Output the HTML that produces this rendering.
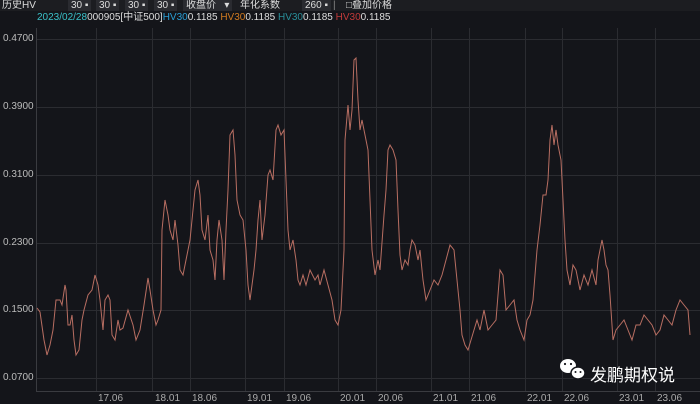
<!DOCTYPE html><html><head><meta charset="utf-8"><style>
body{margin:0;width:700px;height:404px;background:#14151a;overflow:hidden;font-family:"Liberation Sans","Noto Sans CJK SC",sans-serif;position:relative}
.hd{position:absolute;left:0;top:0;width:700px;height:11px;background:#1c1d21;font-size:10px;color:#ddd;line-height:11px}
.hd span{position:absolute;top:0}
.in{background:#2a2b30;color:#ddd;padding:0 3px}
.l2{position:absolute;left:37px;top:12px;font-size:10px;line-height:12px;color:#ddd;white-space:nowrap}
.yl{position:absolute;left:3px;font-size:10px;color:#bbb}
.xl{position:absolute;top:393px;font-size:10px;color:#aaa}
.wm{position:absolute;left:590px;top:361px;color:#fff;font-size:17px}
</style></head><body>
<div class="hd"><span style="left:2px">历史HV</span>
<span style="left:68px" class="in">30 ▪</span><span style="left:96px" class="in">30 ▪</span><span style="left:125px" class="in">30 ▪</span><span style="left:154px" class="in">30 ▪</span>
<span style="left:183px" class="in">收盘价 &nbsp;&nbsp;▾</span><span style="left:240px">年化系数</span><span style="left:302px" class="in">260 ▪</span><span style="left:333px;color:#888">|</span>
<span style="left:346px">□叠加价格</span></div>
<div class="l2"><span style="color:#3ac0c8">2023/02/28</span>000905[中证500]<span style="color:#2a9fd6">HV30</span>0.1185 <span style="color:#d07a20">HV30</span>0.1185 <span style="color:#2a8f9a">HV30</span>0.1185 <span style="color:#c23a3a">HV30</span>0.1185</div>
<svg width="700" height="404" style="position:absolute;left:0;top:0">
<g stroke="#2b2c31" stroke-width="1">
<line x1="36" y1="39.5" x2="700" y2="39.5"/><line x1="36" y1="107.5" x2="700" y2="107.5"/><line x1="36" y1="175.5" x2="700" y2="175.5"/><line x1="36" y1="243.5" x2="700" y2="243.5"/><line x1="36" y1="310.5" x2="700" y2="310.5"/><line x1="36" y1="378.5" x2="700" y2="378.5"/>
<line x1="96.5" y1="28" x2="96.5" y2="391"/><line x1="152.5" y1="28" x2="152.5" y2="391"/><line x1="190.5" y1="28" x2="190.5" y2="391"/><line x1="245.5" y1="28" x2="245.5" y2="391"/><line x1="284.5" y1="28" x2="284.5" y2="391"/><line x1="338.5" y1="28" x2="338.5" y2="391"/><line x1="376.5" y1="28" x2="376.5" y2="391"/><line x1="431.5" y1="28" x2="431.5" y2="391"/><line x1="469.5" y1="28" x2="469.5" y2="391"/><line x1="525.5" y1="28" x2="525.5" y2="391"/><line x1="562.5" y1="28" x2="562.5" y2="391"/><line x1="617.5" y1="28" x2="617.5" y2="391"/><line x1="655.5" y1="28" x2="655.5" y2="391"/>
</g>
<line x1="36.5" y1="28" x2="36.5" y2="391" stroke="#3a3b40"/><line x1="36" y1="391.5" x2="700" y2="391.5" stroke="#3a3b40"/>
<polyline fill="none" stroke="#b86e62" stroke-width="1" points="37,308 40,312 44,340 47,355 50,345 53,330 56,300 60,300 62,305 65,285 66,290 68,325 70,325 72,315 74,340 76,355 79,350 82,320 84,310 88,295 92,290 95,275 98,285 100,300 103,330 105,300 108,295 110,300 112,335 115,340 118,320 120,330 123,328 128,310 133,325 136,340 140,330 144,305 148,278 150,290 153,310 156,325 158,320 161,310 162,230 165,200 168,215 170,230 173,240 175,220 178,245 180,270 183,275 186,260 190,240 192,220 195,190 198,180 200,195 202,230 205,240 208,215 210,250 213,260 215,280 217,240 219,220 222,240 224,280 226,230 228,190 230,135 233,130 235,155 237,200 240,215 243,220 246,250 248,285 250,300 252,285 254,270 256,250 258,220 260,200 262,240 265,215 268,175 270,170 273,180 276,130 278,125 281,135 284,130 286,180 288,230 290,250 293,240 296,260 298,280 300,285 303,275 306,285 310,270 315,280 318,275 320,285 324,270 328,285 332,300 335,320 338,325 341,310 344,250 345,140 348,105 350,130 352,110 354,60 356,58 358,100 360,130 362,120 365,135 368,150 370,200 372,250 375,275 378,260 380,270 384,215 386,190 388,150 390,145 393,150 396,160 398,210 400,255 402,270 405,260 408,265 410,250 412,240 415,245 418,260 420,250 423,280 426,300 430,290 434,280 438,285 442,275 446,260 450,245 454,250 457,280 460,310 462,335 465,345 468,350 471,340 474,330 477,320 480,330 484,310 488,330 492,325 496,320 500,270 503,275 506,310 510,305 514,300 517,320 520,330 524,340 527,320 530,315 533,300 537,250 540,225 543,195 546,195 548,180 550,140 552,125 554,145 556,130 558,145 561,160 563,200 565,240 567,270 570,285 573,265 576,270 580,290 584,275 588,285 592,270 596,285 598,260 600,250 602,240 604,250 606,265 608,270 610,295 613,340 616,330 620,325 624,320 628,330 632,340 636,325 640,325 644,315 648,320 652,325 656,335 660,330 664,315 668,320 672,325 676,310 680,300 684,305 688,310 690,335"/>
<g fill="#fff"><ellipse cx="568" cy="366" rx="8" ry="7"/><ellipse cx="578" cy="373" rx="7" ry="6" stroke="#14151a" stroke-width="1.5"/></g>
<g fill="#14151a"><circle cx="565" cy="364" r="1.1"/><circle cx="571" cy="364" r="1.1"/><circle cx="575.5" cy="372" r="1"/><circle cx="580.5" cy="372" r="1"/></g>
</svg>
<div class="yl" style="top:33px">0.4700</div><div class="yl" style="top:101px">0.3900</div><div class="yl" style="top:169px">0.3100</div><div class="yl" style="top:237px">0.2300</div><div class="yl" style="top:304px">0.1500</div><div class="yl" style="top:372px">0.0700</div>
<div class="xl" style="left:98px">17.06</div><div class="xl" style="left:155px">18.01</div><div class="xl" style="left:192px">18.06</div><div class="xl" style="left:247px">19.01</div><div class="xl" style="left:286px">19.06</div><div class="xl" style="left:340px">20.01</div><div class="xl" style="left:378px">20.06</div><div class="xl" style="left:433px">21.01</div><div class="xl" style="left:471px">21.06</div><div class="xl" style="left:527px">22.01</div><div class="xl" style="left:564px">22.06</div><div class="xl" style="left:619px">23.01</div><div class="xl" style="left:657px">23.06</div>
<div class="wm">发鹏期权说</div>
</body></html>
